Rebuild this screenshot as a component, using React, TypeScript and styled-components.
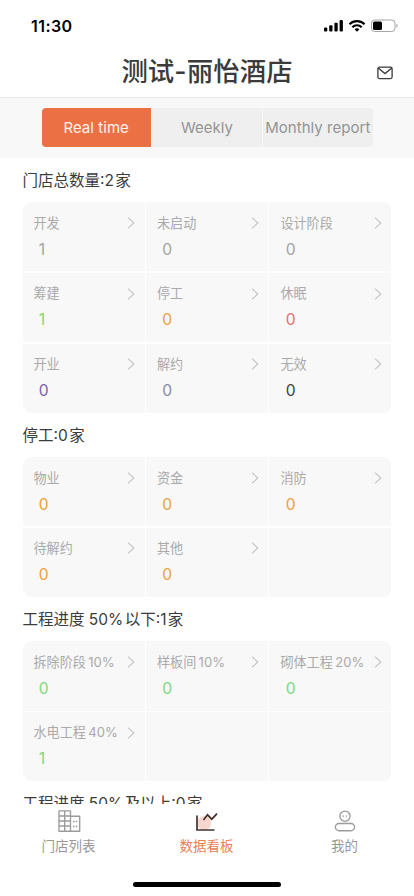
import React from "react";
import styled, { createGlobalStyle } from "styled-components";

const GlobalStyle = createGlobalStyle`
  * { box-sizing: border-box; }
  body { margin: 0; background: #fff; overflow: hidden; }
`;

const Screen = styled.div`
  display: flex;
  flex-direction: column;
  width: 414px;
  height: 896px;
  background: #fff;
  color: #3b3b3b;
  font-family: Inter, "Noto Sans CJK SC", sans-serif;
`;

const StatusBar = styled.div`
  flex: none;
  display: flex;
  align-items: center;
  justify-content: space-between;
  height: 44px;
  padding: 8px 15px 0 31px;
`;

const Clock = styled.span`
  font-size: 16px;
  font-weight: 600;
  line-height: 20px;
  letter-spacing: 0.45px;
  color: #000;
`;

const StatusIcons = styled.svg`
  display: block;
  width: 76px;
  height: 16px;
`;

const Header = styled.header`
  flex: none;
  display: grid;
  grid-template-columns: 50px 1fr 50px;
  align-items: center;
  height: 54px;
  border-bottom: 1px solid #ebebeb;
`;

const Title = styled.h1`
  grid-column: 2;
  margin: 1px 0 0;
  text-align: center;
  font-size: 26.4px;
  font-weight: 500;
  line-height: 36px;
  letter-spacing: 0.1px;
  white-space: nowrap;
`;

const MailIcon = styled.svg`
  width: 16px;
  height: 14px;
  margin: 5px 0 0 13px;
`;

const TabStrip = styled.nav`
  flex: none;
  display: flex;
  justify-content: center;
  height: 60px;
  padding: 10px 0 11px;
  background: #f8f8f8;
`;

const TabGroup = styled.div`
  display: grid;
  grid-template-columns: repeat(3, 1fr);
  gap: 1.5px;
  width: 331px;
  border-radius: 4px;
  overflow: hidden;
`;

const Tab = styled.button<{ $active?: boolean }>`
  padding: 0;
  border: 0;
  background: ${(p) => (p.$active ? "#eb7144" : "#efefef")};
  color: ${(p) => (p.$active ? "#fdf3ef" : "#949494")};
  font: 400 15px/38px Inter, sans-serif;
  letter-spacing: 0.04px;
  white-space: nowrap;
`;

const Content = styled.main`
  flex: 1;
  min-height: 0;
  overflow: hidden;
  padding: 0 22.5px;
`;

const SectionTitle = styled.h2`
  height: 44.2px;
  margin: 0;
  font-size: 15.5px;
  font-weight: 400;
  line-height: 45px;
  white-space: nowrap;
`;

const Card = styled.div`
  display: grid;
  grid-template-columns: repeat(3, 1fr);
  grid-auto-rows: 69.3px;
  gap: 1.4px;
  border-radius: 9px;
  overflow: hidden;
`;

const Cell = styled.div`
  padding: 10.5px 9.5px 0 11px;
  background: #f8f8f8;
`;

const CellHead = styled.div`
  display: flex;
  align-items: center;
  justify-content: space-between;
  height: 20px;
  font-size: 13.1px;
  line-height: 20px;
  color: #aaa;
  white-space: nowrap;
`;

const Arrow = styled.svg`
  flex: none;
  width: 8px;
  height: 12px;
  margin-top: 0.5px;
`;

const Count = styled.div<{ $color: string }>`
  margin: 6px 0 0 5.3px;
  font-size: 15.6px;
  line-height: 22px;
  color: ${(p) => p.$color};
`;

const BottomBar = styled.nav`
  flex: none;
  display: grid;
  grid-template-columns: repeat(3, 1fr);
  height: 74px;
  background: #fff;
`;

const NavItem = styled.a<{ $active?: boolean }>`
  display: flex;
  flex-direction: column;
  align-items: center;
  padding: 5px 1px 0 0;
  font-size: 13.5px;
  line-height: 20px;
  color: ${(p) => (p.$active ? "#e98055" : "#999")};
`;

const NavIcon = styled.svg`
  width: 24px;
  height: 24px;
  margin-bottom: 3px;
`;

const HomeIndicator = styled.div`
  flex: none;
  height: 18px;
  display: flex;
  justify-content: center;
  padding-top: 4px;

  &::after {
    content: "";
    width: 148px;
    height: 5px;
    border-radius: 3px;
    background: #000;
  }
`;

const GRAY = "#a3a3a3";
const ORANGE = "#eda03f";
const GREEN = "#7ed77f";

type Item = { label: string; value: number; color: string };
type SectionData = { title: string; items: Item[]; blanks: number };

const item = (label: string, value: number, color: string): Item => ({ label, value, color });

const sections: SectionData[] = [
  {
    title: "门店总数量:2\u200a家",
    blanks: 0,
    items: [
      item("开发", 1, GRAY),
      item("未启动", 0, GRAY),
      item("设计阶段", 0, GRAY),
      item("筹建", 1, GREEN),
      item("停工", 0, ORANGE),
      item("休眠", 0, "#dd7468"),
      item("开业", 0, "#795faa"),
      item("解约", 0, "#858bab"),
      item("无效", 0, "#3f3f3f"),
    ],
  },
  {
    title: "停工:0\u200a家",
    blanks: 1,
    items: [
      item("物业", 0, ORANGE),
      item("资金", 0, ORANGE),
      item("消防", 0, ORANGE),
      item("待解约", 0, ORANGE),
      item("其他", 0, ORANGE),
    ],
  },
  {
    title: "工程进度 50%\u200a以下:1\u200a家",
    blanks: 2,
    items: [
      item("拆除阶段\u200910%", 0, GREEN),
      item("样板间\u200910%", 0, GREEN),
      item("砌体工程\u200920%", 0, GREEN),
      item("水电工程\u200940%", 1, GREEN),
    ],
  },
];

function Section({ title, items, blanks }: SectionData) {
  return (
    <section>
      <SectionTitle>{title}</SectionTitle>
      <Card>
        {items.map((it) => (
          <Cell key={it.label}>
            <CellHead>
              {it.label}
              <Arrow viewBox="0 0 8 12" fill="none" stroke="#c3c3c6" strokeWidth="1.1">
                <path d="M1 .7 6.8 6 1 11.3" />
              </Arrow>
            </CellHead>
            <Count $color={it.color}>{it.value}</Count>
          </Cell>
        ))}
        {Array.from({ length: blanks }, (_, i) => (
          <Cell key={i} />
        ))}
      </Card>
    </section>
  );
}

export default function App() {
  return (
    <Screen>
      <GlobalStyle />
      <StatusBar>
        <Clock>11:30</Clock>
        <StatusIcons viewBox="0 0 76 16">
          <rect x="1" y="9.5" width="3.3" height="4" rx="1" />
          <rect x="6.2" y="7.3" width="3.3" height="6.2" rx="1" />
          <rect x="11.4" y="4.8" width="3.3" height="8.7" rx="1" />
          <rect x="16.6" y="2" width="3.3" height="11.5" rx="1" />
          <g fill="none" stroke="#000" strokeWidth="2.2">
            <path d="M26.4 6.2a10.9 10.9 0 0 1 15.2 0" />
            <path d="M29.3 9.2a6.7 6.7 0 0 1 9.4 0" />
          </g>
          <path d="M31.6 11.3a3.5 3.5 0 0 1 4.8 0L34 13.7z" />
          <rect x="48.5" y="2" width="23.5" height="11.5" rx="3.3" fill="none" stroke="#a5a5a5" />
          <path d="M73.3 5.8c1.8.6 1.8 3.4 0 4z" fill="#a5a5a5" />
          <rect x="50" y="3.6" width="9" height="8.4" rx="1.6" />
        </StatusIcons>
      </StatusBar>
      <Header>
        <Title>测试-丽怡酒店</Title>
        <MailIcon viewBox="0 0 16 14" fill="none" stroke="#3b3b3b" strokeWidth="1.3">
          <rect x=".9" y="1.2" width="14.2" height="11.4" rx="1.5" />
          <path d="M1.2 2 8 7.6 14.8 2" />
        </MailIcon>
      </Header>
      <TabStrip>
        <TabGroup>
          <Tab $active>Real time</Tab>
          <Tab>Weekly</Tab>
          <Tab>Monthly report</Tab>
        </TabGroup>
      </TabStrip>
      <Content>
        {sections.map((s) => (
          <Section key={s.title} {...s} />
        ))}
        <SectionTitle>工程进度 50%{"\u200a"}及以上:0{"\u200a"}家</SectionTitle>
      </Content>
      <BottomBar>
        <NavItem>
          <NavIcon viewBox="0 0 24 24" fill="none" stroke="#9b9b9b" strokeWidth="1.35" strokeLinejoin="round">
            <path d="M2 1.8h11.5v20.4H2zM2 7h11.5M2 12h11.5M2 17h11.5M7.7 1.8v20.4M13.5 7.2H22.7v15h-9.2M16 12.5h1.6M18.8 12.5h1.6M16 17.5h1.6M18.8 17.5h1.6" />
          </NavIcon>
          门店列表
        </NavItem>
        <NavItem $active>
          <NavIcon viewBox="0 0 24 24" fill="none" stroke="#44302c" strokeWidth="1.7">
            <circle cx="9.2" cy="14" r="7" fill="#f6d6cd" stroke="none" />
            <path d="M2 6.5V21h17.5M8.5 11l4-5.2 4.3 4.4 5.2-5.5" />
          </NavIcon>
          数据看板
        </NavItem>
        <NavItem>
          <NavIcon viewBox="0 0 24 24" fill="none" stroke="#9b9b9b" strokeWidth="1.35">
            <circle cx="12" cy="7.2" r="5.1" />
            <rect x="2.4" y="14.5" width="19.2" height="7.2" rx="3.6" />
            <path d="M10.3 6.6v1.2M13.4 6.6v1.2" />
          </NavIcon>
          我的
        </NavItem>
      </BottomBar>
      <HomeIndicator />
    </Screen>
  );
}
